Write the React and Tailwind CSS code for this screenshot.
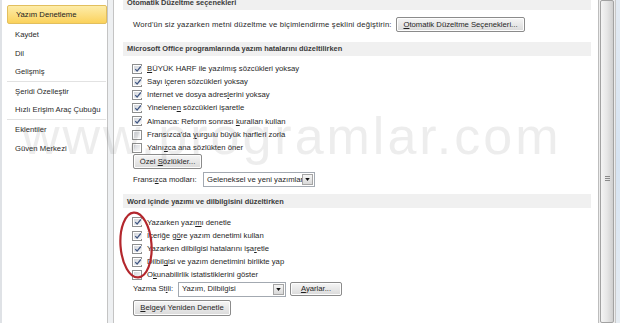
import React from 'react';

const Check = ({ on }) => (
  <span className="w-[10px] h-[10px] border border-[#8e8f8f] bg-white p-px shrink-0 flex">
    <span className="flex-1 bg-gradient-to-br from-[#d4d7dc] to-[#f7f7f7] flex items-center justify-center">
      {on && (
        <svg viewBox="0 0 8 8" className="w-[8px] h-[8px]">
          <path d="M1.3 4.1 L3.1 6.1 L6.8 1.5" fill="none" stroke="#3f5683" strokeWidth="1.3" />
        </svg>
      )}
    </span>
  </span>
);

const U = ({ children }) => <span className="underline underline-offset-1">{children}</span>;

const Btn = ({ children, className }) => (
  <div
    className={`border border-[#8b8b8b] rounded-[2px] bg-gradient-to-b from-[#f6f6f6] to-[#dadada] shadow-[inset_0_0_0_1px_#fdfdfd] flex items-center justify-center shrink-0 ${className}`}
  >
    {children}
  </div>
);

const Select = ({ value, className }) => (
  <div className={`h-[15px] border border-[#a3a9b1] bg-white flex items-center shrink-0 ${className}`}>
    <span className="flex-1 pl-[3px] whitespace-nowrap overflow-hidden">{value}</span>
    <span className="w-[11px] h-[11px] mr-px border border-[#a5a5a5] bg-gradient-to-b from-[#f5f5f5] to-[#d9d9d9] flex items-center justify-center">
      <svg viewBox="0 0 6 4" className="w-[5px] h-[3px]">
        <path d="M0 0 H6 L3 4 Z" fill="#111" />
      </svg>
    </span>
  </div>
);

const Header = ({ children, className = '' }) => (
  <div className={`ml-[9px] mr-[7px] h-[14px] bg-[#f0f0f0] pl-[4px] flex items-center font-bold text-[#3b3b3b] text-[7.4px] ${className}`}>
    {children}
  </div>
);

const Row = ({ on, children }) => (
  <div className="h-[13.2px] pl-[18px] flex items-center gap-[5px]">
    <Check on={on} />
    <span>{children}</span>
  </div>
);

export default function App() {
  const nav = [
    { label: 'Yazım Denetleme', active: true },
    { label: 'Kaydet' },
    { label: 'Dil' },
    { label: 'Gelişmiş', sep: true },
    { label: 'Şeridi Özelleştir' },
    { label: 'Hızlı Erişim Araç Çubuğu', sep: true },
    { label: 'Eklentiler' },
    { label: 'Güven Merkezi' },
  ];

  const office = [
    [true, <><U>B</U>ÜYÜK HARF ile yazılmış sözcükleri yoksay</>],
    [true, <>Sayı i<U>ç</U>eren sözcükleri yoksay</>],
    [true, <>Internet ve dosya adres<U>l</U>erini yoksay</>],
    [true, <>Yinelene<U>n</U> sözcükleri işaretle</>],
    [true, <>Almanca: Reform sonrası <U>k</U>uralları kullan</>],
    [false, <>Fransızca'da <U>y</U>urgulu büyük harfleri zorla</>],
    [false, <>Yalnı<U>z</U>ca ana sözlükten öner</>],
  ];

  const word = [
    [true, <>Yazarken yazı<U>m</U>ı denetle</>],
    [true, <>İçeriğe g<U>ö</U>re yazım denetimi kullan</>],
    [true, <>Yazarken dilbilgisi hatalarını işa<U>r</U>etle</>],
    [true, <>Dilbil<U>g</U>isi ve yazım denetimini birlikte yap</>],
    [false, <>O<U>k</U>unabilirlik istatistiklerini göster</>],
  ];

  return (
    <div className="relative w-[620px] h-[323px] overflow-hidden flex bg-white text-[#1f1f1f] text-[7.7px] font-['Liberation_Sans',Arial,sans-serif]">
      {/* left navigation */}
      <div className="w-[108px] shrink-0 border-l-2 border-l-[#dfe2e6] border-r border-r-[#c4c4c4] pt-[5px] pl-[5px] bg-white text-[#2a2a2a]">
        {nav.map((n) => (
          <div
            key={n.label}
            className={`h-[19px] flex items-center pl-[8px] ${
              n.active
                ? 'h-[18px] mb-px rounded-[2px] border border-[#e2bf5e] bg-gradient-to-b from-[#fdeca8] to-[#fbd25a] text-[#222]'
                : ''
            } ${n.sep ? 'border-b border-b-[#e2e2e2] mr-px' : ''}`}
          >
            {n.label}
          </div>
        ))}
      </div>

      <div className="w-[5px] shrink-0 bg-[#eef0f2]" />

      {/* content */}
      <div className="flex-1 border-l border-[#c4c4c4] bg-white">
        <div className="-mt-[4px]">
          <Header>Otomatik Düzeltme seçenekleri</Header>

          <div className="mt-[7px] h-[15px] pl-[19px] flex items-center">
            <span className="w-[263px] shrink-0 tracking-[0.18px]">Word'ün siz yazarken metni düzeltme ve biçimlendirme şeklini değiştirin:</span>
            <Btn className="w-[129px] h-[15px]">
              <span><U>O</U>tomatik Düzeltme Seçenekleri...</span>
            </Btn>
          </div>

          <Header className="mt-[10px]">Microsoft Office programlarında yazım hatalarını düzeltilirken</Header>

          <div className="mt-[6px]">
            {office.map(([on, t], i) => (
              <Row key={i} on={on}>{t}</Row>
            ))}
          </div>

          <div className="pl-[19px]">
            <Btn className="w-[69px] h-[15px]">
              <span>Özel <U>S</U>özlükler...</span>
            </Btn>
          </div>

          <div className="mt-[3px] h-[15px] pl-[19px] flex items-center">
            <span className="w-[70px] shrink-0">Fransı<U>z</U>ca modları:</span>
            <Select value="Geleneksel ve yeni yazımlar" className="w-[112px]" />
          </div>

          <Header className="mt-[7px]">Word içinde yazımı ve dilbilgisini düzeltirken</Header>

          <div className="mt-[7.5px]">
            {word.map(([on, t], i) => (
              <Row key={i} on={on}>{t}</Row>
            ))}
          </div>

          <div className="h-[15px] pl-[19px] flex items-center">
            <span className="w-[45px] shrink-0">Yazma St<U>i</U>li:</span>
            <Select value="Yazım, Dilbilgisi" className="w-[108px]" />
            <Btn className="ml-[4px] w-[52px] h-[14px]">
              <span><U>A</U>yarlar...</span>
            </Btn>
          </div>

          <div className="mt-[3px] pl-[19px]">
            <Btn className="w-[98px] h-[16px]">
              <span><U>B</U>elgeyi Yeniden Denetle</span>
            </Btn>
          </div>
        </div>
      </div>

      {/* scrollbar */}
      <div className="w-[17px] shrink-0 bg-[#ececec] border-l border-[#bdbdbd] px-[1px] flex">
        <div className="flex-1 border border-[#a2a2a2] rounded-[2px] bg-gradient-to-r from-[#f4f4f4] via-[#e6e6e6] to-[#cfcfcf] flex items-center justify-center">
          <div className="flex flex-col gap-[1px] mt-[33px]">
            <span className="block w-[5px] h-px bg-[#8a8a8a]" />
            <span className="block w-[5px] h-px bg-[#8a8a8a]" />
            <span className="block w-[5px] h-px bg-[#8a8a8a]" />
          </div>
        </div>
      </div>
      <div className="w-[5px] shrink-0 bg-gradient-to-b from-[#e3eaf2] via-[#d6e3f1] to-[#e6ecf2] border-l border-[#c9c9c9]" />

      {/* watermark */}
      <div className="pointer-events-none absolute left-[22px] top-[110px] text-[52px] leading-none tracking-[3px] text-[rgba(90,90,90,0.11)] whitespace-nowrap">
        www.programlar.com
      </div>

      {/* red annotation */}
      <svg className="pointer-events-none absolute left-[116px] top-[208px]" width="40" height="74" viewBox="0 0 40 74">
        <ellipse cx="20" cy="37" rx="15.5" ry="32.5" transform="rotate(-4 20 37)" fill="none" stroke="#b3272d" strokeWidth="2.2" />
      </svg>
    </div>
  );
}
